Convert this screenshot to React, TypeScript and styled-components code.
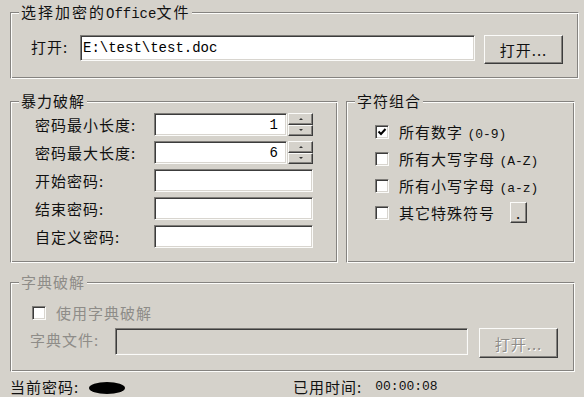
import React from 'react';
import styled, { createGlobalStyle, css } from 'styled-components';

const BG = '#d5d2cb';

const Global = createGlobalStyle`
  html, body { margin: 0; padding: 0; background: ${BG}; }
  #root { width: 584px; height: 397px; overflow: hidden; }
`;

const Window = styled.div`
  width: 584px;
  height: 397px;
  box-sizing: border-box;
  overflow: hidden;
  background: ${BG};
  padding: 12px 0 0 10px;
  display: flex;
  flex-direction: column;
  font-family: "Noto Sans CJK SC", "Noto Sans", sans-serif;
  font-size: 15px;
  letter-spacing: 1px;
  color: #111;
`;

const Group = styled.section<{ $w: number; $h: number; $mt?: number }>`
  position: relative;
  box-sizing: border-box;
  width: ${(p) => p.$w}px;
  height: ${(p) => p.$h}px;
  margin-top: ${(p) => p.$mt ?? 0}px;
  border: 1px solid;
  border-color: #858380 #fdfdfb #fdfdfb #858380;
  box-shadow: inset 1px 1px 0 #fdfdfb, inset -1px -1px 0 #858380;
  flex-shrink: 0;
`;

const GroupTitle = styled.h2<{ $disabled?: boolean; $wide?: boolean }>`
  position: absolute;
  top: -10px;
  left: 8px;
  margin: 0;
  padding: 0 2px;
  background: ${BG};
  font-size: 15px;
  font-weight: normal;
  line-height: 18px;
  letter-spacing: ${(p) => (p.$wide ? 2 : 1)}px;
  color: ${(p) => (p.$disabled ? '#8e8c88' : '#111')};
  white-space: nowrap;
`;

const Mono = styled.span<{ $size?: number }>`
  font-family: "Liberation Mono", "DejaVu Sans Mono", monospace;
  font-size: ${(p) => p.$size ?? 13}px;
  letter-spacing: 0;
`;

const sunken = css`
  box-sizing: border-box;
  border: 1px solid;
  border-color: #7e7c78 #fbfbf9 #fbfbf9 #7e7c78;
  box-shadow: inset 1px 1px 0 #3c3c3c, inset -1px -1px 0 #d8d5cf;
`;

const raised = css`
  box-sizing: border-box;
  border: 1px solid;
  border-color: #fbfbf9 #3c3c3c #3c3c3c #fbfbf9;
  box-shadow: inset -1px -1px 0 #84827e;
  background: ${BG};
`;

const FileRow = styled.div`
  display: flex;
  align-items: flex-start;
  padding: 22px 0 0 20px;
`;

const Label = styled.span<{ $w?: number; $disabled?: boolean }>`
  display: inline-block;
  width: ${(p) => (p.$w ? `${p.$w}px` : 'auto')};
  flex-shrink: 0;
  line-height: 23px;
  white-space: nowrap;
  color: ${(p) => (p.$disabled ? '#8e8c88' : '#111')};
`;

const TextField = styled.div<{ $w: number; $h: number; $disabled?: boolean; $right?: boolean }>`
  ${sunken};
  width: ${(p) => p.$w}px;
  height: ${(p) => p.$h}px;
  flex-shrink: 0;
  background: ${(p) => (p.$disabled ? BG : '#fff')};
  display: flex;
  align-items: center;
  justify-content: ${(p) => (p.$right ? 'flex-end' : 'flex-start')};
  padding: 0 ${(p) => (p.$right ? 8 : 2)}px;
  font-family: "Liberation Mono", "DejaVu Sans Mono", monospace;
  font-size: 14px;
  letter-spacing: 0;
  color: #000;
`;

const Button = styled.div<{ $w: number; $h: number; $disabled?: boolean; $ml?: number }>`
  ${raised};
  width: ${(p) => p.$w}px;
  height: ${(p) => p.$h}px;
  margin-left: ${(p) => p.$ml ?? 0}px;
  flex-shrink: 0;
  display: flex;
  align-items: center;
  justify-content: center;
  font-size: 15px;
  color: ${(p) => (p.$disabled ? '#8e8c88' : '#111')};
  text-shadow: ${(p) => (p.$disabled ? '1px 1px 0 #fff' : 'none')};
`;

const MiddleRow = styled.div`
  display: flex;
  gap: 8px;
  margin-top: 22px;
`;

const FieldGrid = styled.div`
  display: grid;
  grid-template-columns: 119px 159px;
  grid-auto-rows: 23px;
  row-gap: 5px;
  align-items: center;
  padding: 11px 0 0 24px;
`;

const SpinField = styled.div`
  display: flex;
  gap: 1px;
`;

const Spinner = styled.div`
  display: flex;
  flex-direction: column;
  width: 25px;
  height: 23px;
`;

const SpinHalf = styled.div`
  ${raised};
  flex: 1;
  display: flex;
  align-items: center;
  justify-content: center;
`;

const Arrow = styled.span<{ $up?: boolean }>`
  width: 0;
  height: 0;
  border-left: 2px solid transparent;
  border-right: 2px solid transparent;
  ${(p) => (p.$up ? 'border-bottom: 2px solid #333;' : 'border-top: 2px solid #333;')}
`;

const CheckList = styled.div`
  display: flex;
  flex-direction: column;
  padding: 16px 0 0 28px;
`;

const CheckRow = styled.div<{ $disabled?: boolean }>`
  display: flex;
  align-items: center;
  height: 27px;
  gap: 10px;
  white-space: nowrap;
  color: ${(p) => (p.$disabled ? '#8e8c88' : '#111')};
`;

const CheckBox = styled.span`
  ${sunken};
  width: 14px;
  height: 14px;
  background: #fff;
  flex-shrink: 0;
  display: flex;
  align-items: center;
  justify-content: center;
`;

const DictBody = styled.div`
  display: flex;
  flex-direction: column;
  padding: 16px 0 0 19px;
`;

const DictCheck = styled(CheckRow)`
  padding-left: 2px;
`;

const DictFileRow = styled.div`
  display: flex;
  align-items: flex-start;
  margin-top: 2px;
`;

const StatusBar = styled.div`
  display: flex;
  align-items: center;
  margin-top: 7px;
  height: 16px;
  line-height: 16px;
  white-space: nowrap;
`;

const StatusCell = styled.div<{ $w?: number }>`
  display: flex;
  align-items: center;
  width: ${(p) => (p.$w ? `${p.$w}px` : 'auto')};
  flex-shrink: 0;
`;

const Blob = styled.span`
  display: inline-block;
  width: 36px;
  height: 12px;
  margin: 1px 0 0 10px;
  border-radius: 50%;
  background: #000;
`;

const Check = () => (
  <svg width="10" height="10" viewBox="0 0 10 10">
    <polyline points="1.5,4.5 4,7 8.5,2" fill="none" stroke="#000" strokeWidth="2" />
  </svg>
);

export default function App() {
  return (
    <Window>
      <Global />
      <Group $w={569} $h={67}>
        <GroupTitle $wide>
          选择加密的<Mono $size={14}>Office</Mono>文件
        </GroupTitle>
        <FileRow>
          <Label $w={49}>打开:</Label>
          <TextField $w={395} $h={26}>E:\test\test.doc</TextField>
          <Button $w={79} $h={29} $ml={9}>
            打开...
          </Button>
        </FileRow>
      </Group>

      <MiddleRow>
        <Group $w={328} $h={162}>
          <GroupTitle>暴力破解</GroupTitle>
          <FieldGrid>
            <Label>密码最小长度:</Label>
            <SpinField>
              <TextField $w={133} $h={23} $right>
                1
              </TextField>
              <Spinner>
                <SpinHalf>
                  <Arrow $up />
                </SpinHalf>
                <SpinHalf>
                  <Arrow />
                </SpinHalf>
              </Spinner>
            </SpinField>
            <Label>密码最大长度:</Label>
            <SpinField>
              <TextField $w={133} $h={23} $right>
                6
              </TextField>
              <Spinner>
                <SpinHalf>
                  <Arrow $up />
                </SpinHalf>
                <SpinHalf>
                  <Arrow />
                </SpinHalf>
              </Spinner>
            </SpinField>
            <Label>开始密码:</Label>
            <TextField $w={159} $h={23} />
            <Label>结束密码:</Label>
            <TextField $w={159} $h={23} />
            <Label>自定义密码:</Label>
            <TextField $w={159} $h={23} />
          </FieldGrid>
        </Group>

        <Group $w={229} $h={162}>
          <GroupTitle>字符组合</GroupTitle>
          <CheckList>
            <CheckRow>
              <CheckBox>
                <Check />
              </CheckBox>
              <span>
                所有数字 <Mono $size={13}>(0-9)</Mono>
              </span>
            </CheckRow>
            <CheckRow>
              <CheckBox />
              <span>
                所有大写字母 <Mono $size={13}>(A-Z)</Mono>
              </span>
            </CheckRow>
            <CheckRow>
              <CheckBox />
              <span>
                所有小写字母 <Mono $size={13}>(a-z)</Mono>
              </span>
            </CheckRow>
            <CheckRow>
              <CheckBox />
              <span>其它特殊符号</span>
              <Button $w={17} $h={21} $ml={5}>
                .
              </Button>
            </CheckRow>
          </CheckList>
        </Group>
      </MiddleRow>

      <Group $w={565} $h={90} $mt={19}>
        <GroupTitle $disabled>字典破解</GroupTitle>
        <DictBody>
          <DictCheck $disabled>
            <CheckBox />
            <span>使用字典破解</span>
          </DictCheck>
          <DictFileRow>
            <Label $w={85} $disabled>
              字典文件:
            </Label>
            <TextField $w={353} $h={27} $disabled />
            <Button $w={79} $h={30} $ml={11} $disabled>
              打开...
            </Button>
          </DictFileRow>
        </DictBody>
      </Group>

      <StatusBar>
        <StatusCell $w={283}>
          当前密码:
          <Blob />
        </StatusCell>
        <StatusCell>
          已用时间:&nbsp;&nbsp;&nbsp;<Mono $size={13}>00:00:08</Mono>
        </StatusCell>
      </StatusBar>
    </Window>
  );
}
